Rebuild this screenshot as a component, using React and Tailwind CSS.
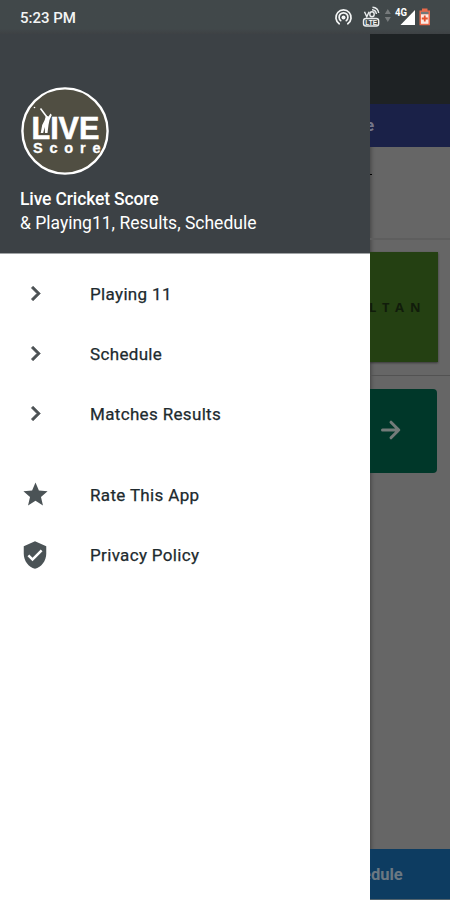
import React from "react";

const roboto = "font-['Roboto',sans-serif]";

function Chevron() {
  return (
    <svg viewBox="0 0 24 24" className="mb-px size-[29px] fill-[#4b5053] stroke-[#4b5053] stroke-[0.6]">
      <path d="M8.59 16.59 13.17 12 8.59 7.41 10 6l6 6-6 6z" />
    </svg>
  );
}

function Star() {
  return (
    <svg viewBox="0 0 24 24" className="mb-px size-[29px] fill-[#4b5356]">
      <path d="M12 17.27 18.18 21l-1.64-7.03L22 9.24l-7.19-.61L12 2 9.19 8.63 2 9.24l5.46 4.73L5.82 21z" />
    </svg>
  );
}

function Shield() {
  return (
    <svg viewBox="0 0 24 24" className="size-[30px] fill-[#4b5356]">
      <path d="M12 1 3 5v6c0 5.55 3.84 10.74 9 12 5.16-1.26 9-6.45 9-12V5l-9-4zm-2 16-4-4 1.41-1.41L10 14.17l6.59-6.59L18 9l-8 8z" />
    </svg>
  );
}

function Item({ icon, label }) {
  return (
    <div className="flex h-[60px] items-center">
      <div className="flex w-[70px] items-center justify-center">{icon}</div>
      <span className="ml-5 pt-[2px] text-[17px] tracking-[0.34px] text-[#202a2e] [-webkit-text-stroke:0.25px_#202a2e]">{label}</span>
    </div>
  );
}

function Logo() {
  return (
    <svg viewBox="0 0 88 88" className="size-[88px]">
      <circle cx="44" cy="44" r="42.6" fill="#504e42" stroke="#fff" strokeWidth="2.4" />
      <g fill="#fff" fontFamily="Liberation Sans, Arial, sans-serif" fontWeight="700">
        <text x="10.5" y="51.8" fontSize="30.5" textLength="67.8" lengthAdjust="spacingAndGlyphs" stroke="#fff" strokeWidth=".6">LIVE</text>
        <text x="12" y="66" fontSize="14.5" textLength="67.5" lengthAdjust="spacing" stroke="#fff" strokeWidth=".3">Score</text>
      </g>
      <path d="M25 28.5 27.5 29.5 29.5 26.5 30.8 28 28.5 33 27.5 38 26.5 46H24l-.3-6-1.5 6h-2.5l1.5-8 2.5-5z" fill="#fff" stroke="#504e42" strokeWidth="1.2" paintOrder="stroke" />
      <path d="m19.5 21.5 6 8" stroke="#fff" strokeWidth="1.6" />
      <circle cx="13.5" cy="20.5" r=".8" fill="#fff" />
    </svg>
  );
}

function StatusIcons() {
  return (
    <svg viewBox="0 0 130 34" className="h-[34px] w-[130px]">
      <g fill="none" stroke="#f3f5f5" strokeWidth="1.7" strokeLinecap="round">
        <path d="M19.2 23.8a7.6 7.6 0 1 1 8.6 0" />
        <path d="M20.7 20.6a4.4 4.4 0 1 1 5.6 0" />
      </g>
      <circle cx="23.5" cy="17.4" r="2" fill="#f3f5f5" />
      <g fill="none" stroke="#e9eced" strokeWidth="1.4">
        <path d="m44.5 11.8 2.3 5 2.3-5" />
        <ellipse cx="52" cy="14.3" rx="2.2" ry="2.5" />
        <path d="M52 9.8q3.8.2 4.4 4.2M52.5 7.2q5.5.3 6.2 5.8" />
        <rect x="43.5" y="18.5" width="15.2" height="7.5" rx="2.5" />
      </g>
      <text x="51.1" y="24.7" fill="#f3f5f5" fontSize="6.5" fontWeight="700" textAnchor="middle" fontFamily="Liberation Sans, sans-serif">LTE</text>
      <path d="M64.8 14h6l-3-5zM64.8 17h6l-3 5z" fill="#777b7d" />
      <text x="75" y="16" fill="#fff" fontSize="10.5" fontWeight="700" textLength="12" lengthAdjust="spacingAndGlyphs" fontFamily="Roboto, sans-serif">4G</text>
      <path d="M95 10v15H80.5z" fill="#fff" />
      <path d="M102 8.5h5.5v2h2.5v14.8H99.5V10.5h2.5z" fill="#e96a4b" />
      <path d="M101 11.8h7.5v2.5H101z" fill="#70797a" />
      <path d="M101 14.3h7.5v9.5H101z" fill="#fbe9e2" />
      <path d="M104.75 15.5v6M101.75 18.5h6" stroke="#e2532f" strokeWidth="1.8" />
    </svg>
  );
}

function Peek() {
  return (
    <section className="flex w-20 flex-col overflow-hidden bg-[#666666] shadow-[inset_4px_0_4px_-3px_rgba(0,0,0,0.35)]">
      <div className="h-[70px] bg-[#1e2224]" />
      <div className="flex h-[43px] items-center bg-[#1a2148]">
        <span className="-ml-[5px] pt-px text-[17px] font-bold text-[#74778a]">e</span>
      </div>
      <div className="h-[93px] border-b-2 border-[#5e5e5e] pt-[27px]">
        <div className="h-px w-[2px] bg-black" />
      </div>
      <div className="h-[136px] border-b border-[#525252] pt-[12px]">
        <div className="flex h-[110px] w-[68px] items-center bg-[#244012] shadow-[0_1px_2px_rgba(0,0,0,0.45)]">
          <span className="-ml-px flex gap-[5px] pt-px text-[13px] font-bold text-[#111c0b] font-['Open_Sans',sans-serif]">
            <span className="w-[8px]">L</span>
            <span className="w-[8px]">T</span>
            <span className="w-[10px]">A</span>
            <span>N</span>
          </span>
        </div>
      </div>
      <div className="mt-[13px] flex h-[84px] w-[67px] items-center rounded-r bg-[#003729] pb-[2px]">
        <svg viewBox="0 0 20 20" className="ml-[11px] size-5 fill-none stroke-[#737b79] stroke-[3]">
          <path d="M1.5 10h16M10 2.2 17.8 10 10 17.8" strokeLinecap="round" strokeLinejoin="round" />
        </svg>
      </div>
      <div className="mt-auto flex h-[51px] items-center border-b border-[#53646e] bg-[#0d3c61]">
        <span className="-ml-2 pt-[2px] text-[16.5px] font-bold text-[#6b7882]">edule</span>
      </div>
    </section>
  );
}

export default function App() {
  return (
    <div className={`flex h-[900px] w-[450px] flex-col overflow-hidden bg-[#666666] ${roboto}`}>
      <header className="flex h-[34px] items-center justify-between bg-linear-to-b from-[#41484a] from-85% to-[#3e4144]">
        <span className="ml-5 mt-0.5 text-[15px] font-medium text-[#f3f5f5]">5:23 PM</span>
        <StatusIcons />
      </header>
      <main className="flex flex-1">
        <aside className="flex w-[370px] flex-col bg-white">
          <div className="h-[220px] border-b border-[#a0a3a5] bg-[#3c4145] pl-5 pt-[53px] text-white">
            <div className="ml-px"><Logo /></div>
            <h1 className="mt-[12px] text-[17.5px] font-medium leading-6 tracking-[-0.14px]">Live Cricket Score</h1>
            <p className="text-[17.5px] leading-6">&amp; Playing11, Results, Schedule</p>
          </div>
          <nav className="pt-[10px]">
            <Item icon={<Chevron />} label="Playing 11" />
            <Item icon={<Chevron />} label="Schedule" />
            <Item icon={<Chevron />} label="Matches Results" />
            <div className="h-[21px]" />
            <Item icon={<Star />} label="Rate This App" />
            <Item icon={<Shield />} label="Privacy Policy" />
          </nav>
        </aside>
        <Peek />
      </main>
    </div>
  );
}
